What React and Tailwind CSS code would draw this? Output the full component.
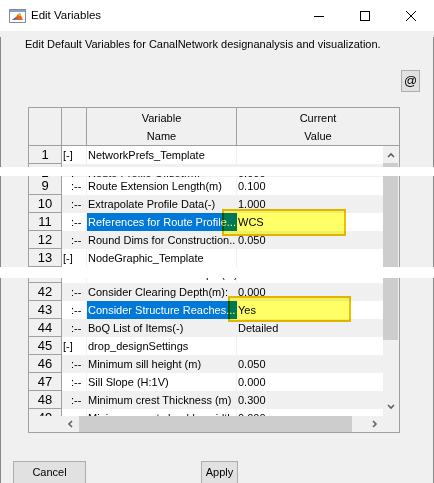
import React from "react";

const FONT = { fontFamily: '"Liberation Sans", Arial, sans-serif' };

const ROWS_TOP = [
    { n: 1, marker: "[-]", name: "NetworkPrefs_Template", value: "" },
];

const ROWS_MID = [
    { n: 9, marker: ":--", name: "Route Extension Length(m)", value: "0.100" },
    { n: 10, marker: ":--", name: "Extrapolate Profile Data(-)", value: "1.000" },
    { n: 11, marker: ":--", name: "References for Route Profile...", value: "WCS", sel: true },
    { n: 12, marker: ":--", name: "Round Dims for Construction...", value: "0.050" },
    { n: 13, marker: "[-]", name: "NodeGraphic_Template", value: "" },
];

const ROWS_BOTTOM = [
    { n: 42, marker: ":--", name: "Consider Clearing Depth(m):", value: "0.000" },
    { n: 43, marker: ":--", name: "Consider Structure Reaches...", value: "Yes", sel: true },
    { n: 44, marker: ":--", name: "BoQ List of Items(-)", value: "Detailed" },
    { n: 45, marker: "[-]", name: "drop_designSettings", value: "" },
    { n: 46, marker: ":--", name: "Minimum sill height (m)", value: "0.050" },
    { n: 47, marker: ":--", name: "Sill Slope (H:1V)", value: "0.000" },
    { n: 48, marker: ":--", name: "Minimum crest Thickness (m)", value: "0.300" },
];

function Chevron({ dir }) {
    const pts = {
        up: "1,5 4,2 7,5",
        down: "1,2 4,5 7,2",
        left: "5,1 2,4 5,7",
        right: "2,1 5,4 2,7",
    }[dir];
    return (
        <svg width="8" height="8" viewBox="0 0 8 8">
            <polyline points={pts} fill="none" stroke="#606060" strokeWidth="1.6" />
        </svg>
    );
}

function Row({ n, marker, name, value, sel }) {
    const stripe = n % 2 === 0 ? "bg-[#f0f0f0]" : "bg-white";
    return (
        <div className="flex h-[18px] shrink-0">
            <div className="w-[33px] shrink-0 border-r border-b border-[#a0a0a0] bg-[#f0f0f0] text-center text-[13px] leading-[17px] text-black">
                {n}
            </div>
            <div className={`flex flex-1 ${stripe} text-[11px] leading-[18px] text-black`}>
                <div className={`w-[25px] shrink-0 border-r border-[#f0f0f0] whitespace-pre ${marker === "[-]" ? "pl-[1px]" : "pl-[9px]"}`}>
                    {marker}
                </div>
                <div
                    className={`w-[150px] shrink-0 overflow-hidden whitespace-nowrap pl-[1px] ${
                        sel ? "bg-[#0078d7] text-white" : "border-r border-[#f0f0f0]"
                    }`}
                >
                    {name}
                </div>
                <div className="flex-1 overflow-hidden whitespace-nowrap pl-[1px]">{value}</div>
            </div>
        </div>
    );
}

export default function App() {
    return (
        <div className="relative h-[483px] w-[434px] overflow-hidden bg-[#f0f0f0]" style={FONT}>
            {/* Title bar */}
            <div className="flex h-[31px] items-center bg-white">
                <svg width="17" height="14" viewBox="0 0 17 14" className="ml-[9px] mt-[1px]">
                    <rect x="0.5" y="0.5" width="16" height="13" fill="#fff" stroke="#8a8a8a" />
                    <rect x="1" y="1" width="15" height="2" fill="#7aa6dc" />
                    <path d="M3 11 L7 8 L9 5 L11 4 L14 11 Z" fill="#e8641c" />
                    <path d="M3 11 L7 8 L9 9 L6 11 Z" fill="#3d74b8" />
                    <path d="M9 5 L11 4 L12 7 L10 7 Z" fill="#f6b03a" />
                </svg>
                <span className="ml-[5px] text-[11.5px] text-black">Edit Variables</span>
                <div className="flex-1" />
                <div className="flex h-full w-[46px] items-center justify-center">
                    <svg width="10" height="10" viewBox="0 0 10 10">
                        <line x1="0" y1="5.5" x2="10" y2="5.5" stroke="#000" />
                    </svg>
                </div>
                <div className="flex h-full w-[46px] items-center justify-center">
                    <svg width="10" height="10" viewBox="0 0 10 10">
                        <rect x="0.5" y="0.5" width="9" height="9" fill="none" stroke="#000" />
                    </svg>
                </div>
                <div className="flex h-full w-[46px] items-center justify-center">
                    <svg width="10" height="10" viewBox="0 0 10 10">
                        <path d="M0 0 L10 10 M10 0 L0 10" stroke="#000" strokeWidth="1" />
                    </svg>
                </div>
            </div>

            {/* Body */}
            <div className="h-[452px] border-x border-[#888888]">
                <p className="ml-[24px] mt-[6px] text-[11px] leading-[14px] text-black">
                    Edit Default Variables for CanalNetwork designanalysis and visualization.
                </p>

                <div className="mt-[19px] flex justify-end pr-[13px]">
                    <button className="flex h-[22px] w-[19px] items-center justify-center border border-[#adadad] bg-[#e1e1e1] text-[13px] text-black">
                        @
                    </button>
                </div>

                {/* Table */}
                <div className="ml-[27px] mt-[15px] w-[372px] border border-[#a0a0a0] bg-[#f0f0f0]">
                    <div className="flex h-[38px] border-b border-[#a0a0a0] bg-[#f0f0f0] text-[11px] leading-[18px] text-black">
                        <div className="w-[33px] border-r border-[#a0a0a0]" />
                        <div className="w-[25px] border-r border-[#a0a0a0]" />
                        <div className="flex w-[150px] flex-col items-center justify-center border-r border-[#a0a0a0]">
                            <span>Variable</span>
                            <span>Name</span>
                        </div>
                        <div className="flex flex-1 flex-col items-center justify-center">
                            <span>Current</span>
                            <span>Value</span>
                        </div>
                    </div>

                    <div className="flex">
                        <div className="w-[354px]">
                            <div className="flex h-[270px] flex-col overflow-hidden">
                                {ROWS_TOP.map((r) => (
                                    <Row key={r.n} {...r} />
                                ))}
                                <div className="flex h-[13px] shrink-0 flex-col overflow-hidden">
                                    <Row n={2} marker=":--" name="Route Profile Offset(m)" value="0.000" />
                                </div>
                                {ROWS_MID.map((r) => (
                                    <Row key={r.n} {...r} />
                                ))}
                                <div className="flex h-[16px] shrink-0 flex-col justify-end overflow-hidden">
                                    <Row n={41} marker=":--" name="Consider Excavation Depth(m)" value="0.000" />
                                </div>
                                {ROWS_BOTTOM.map((r) => (
                                    <Row key={r.n} {...r} />
                                ))}
                                <Row n={49} marker=":--" name="Minimum crest shoulder width" value="0.000" />
                            </div>
                            {/* Horizontal scrollbar */}
                            <div className="flex h-[16px]">
                                <div className="w-[33px] bg-[#f0f0f0]" />
                                <div className="flex flex-1 bg-[#f0f0f0]">
                                    <div className="flex w-[17px] items-center justify-center">
                                        <Chevron dir="left" />
                                    </div>
                                    <div className="w-[273px] bg-[#cdcdcd]" />
                                    <div className="flex-1" />
                                    <div className="flex w-[17px] items-center justify-center">
                                        <Chevron dir="right" />
                                    </div>
                                </div>
                            </div>
                        </div>
                        {/* Vertical scrollbar */}
                        <div className="flex w-[16px] flex-col">
                            <div className="flex h-[270px] flex-col bg-[#f0f0f0]">
                                <div className="flex h-[17px] items-center justify-center pt-[2px]">
                                    <Chevron dir="up" />
                                </div>
                                <div className="h-[177px] w-[15px] bg-[#cdcdcd]" />
                                <div className="flex-1" />
                                <div className="flex h-[17px] items-center justify-center pb-[2px]">
                                    <Chevron dir="down" />
                                </div>
                            </div>
                            <div className="h-[16px] bg-[#f0f0f0]" />
                        </div>
                    </div>
                </div>

                {/* Buttons */}
                <div className="mt-[28px] flex">
                    <button className="ml-[12px] h-[23px] w-[73px] border border-[#adadad] bg-[#e1e1e1] text-[11px] text-black">
                        Cancel
                    </button>
                    <button className="ml-[115px] h-[23px] w-[37px] border border-[#adadad] bg-[#e1e1e1] text-[11px] text-black">
                        Apply
                    </button>
                </div>
            </div>

            {/* Yellow annotation boxes */}
            <div className="absolute left-[222px] top-[209px] h-[27px] w-[124px] border-2 border-[#f0bf00] bg-[#ffff66] mix-blend-multiply" />
            <div className="absolute left-[228px] top-[296px] h-[26px] w-[123px] border-2 border-[#f0bf00] bg-[#ffff66] mix-blend-multiply" />

            {/* Torn screenshot strips */}
            <div className="absolute left-0 top-[167px] h-[9px] w-full bg-white" />
            <div className="absolute left-0 top-[267px] h-[11px] w-full bg-white" />
        </div>
    );
}
